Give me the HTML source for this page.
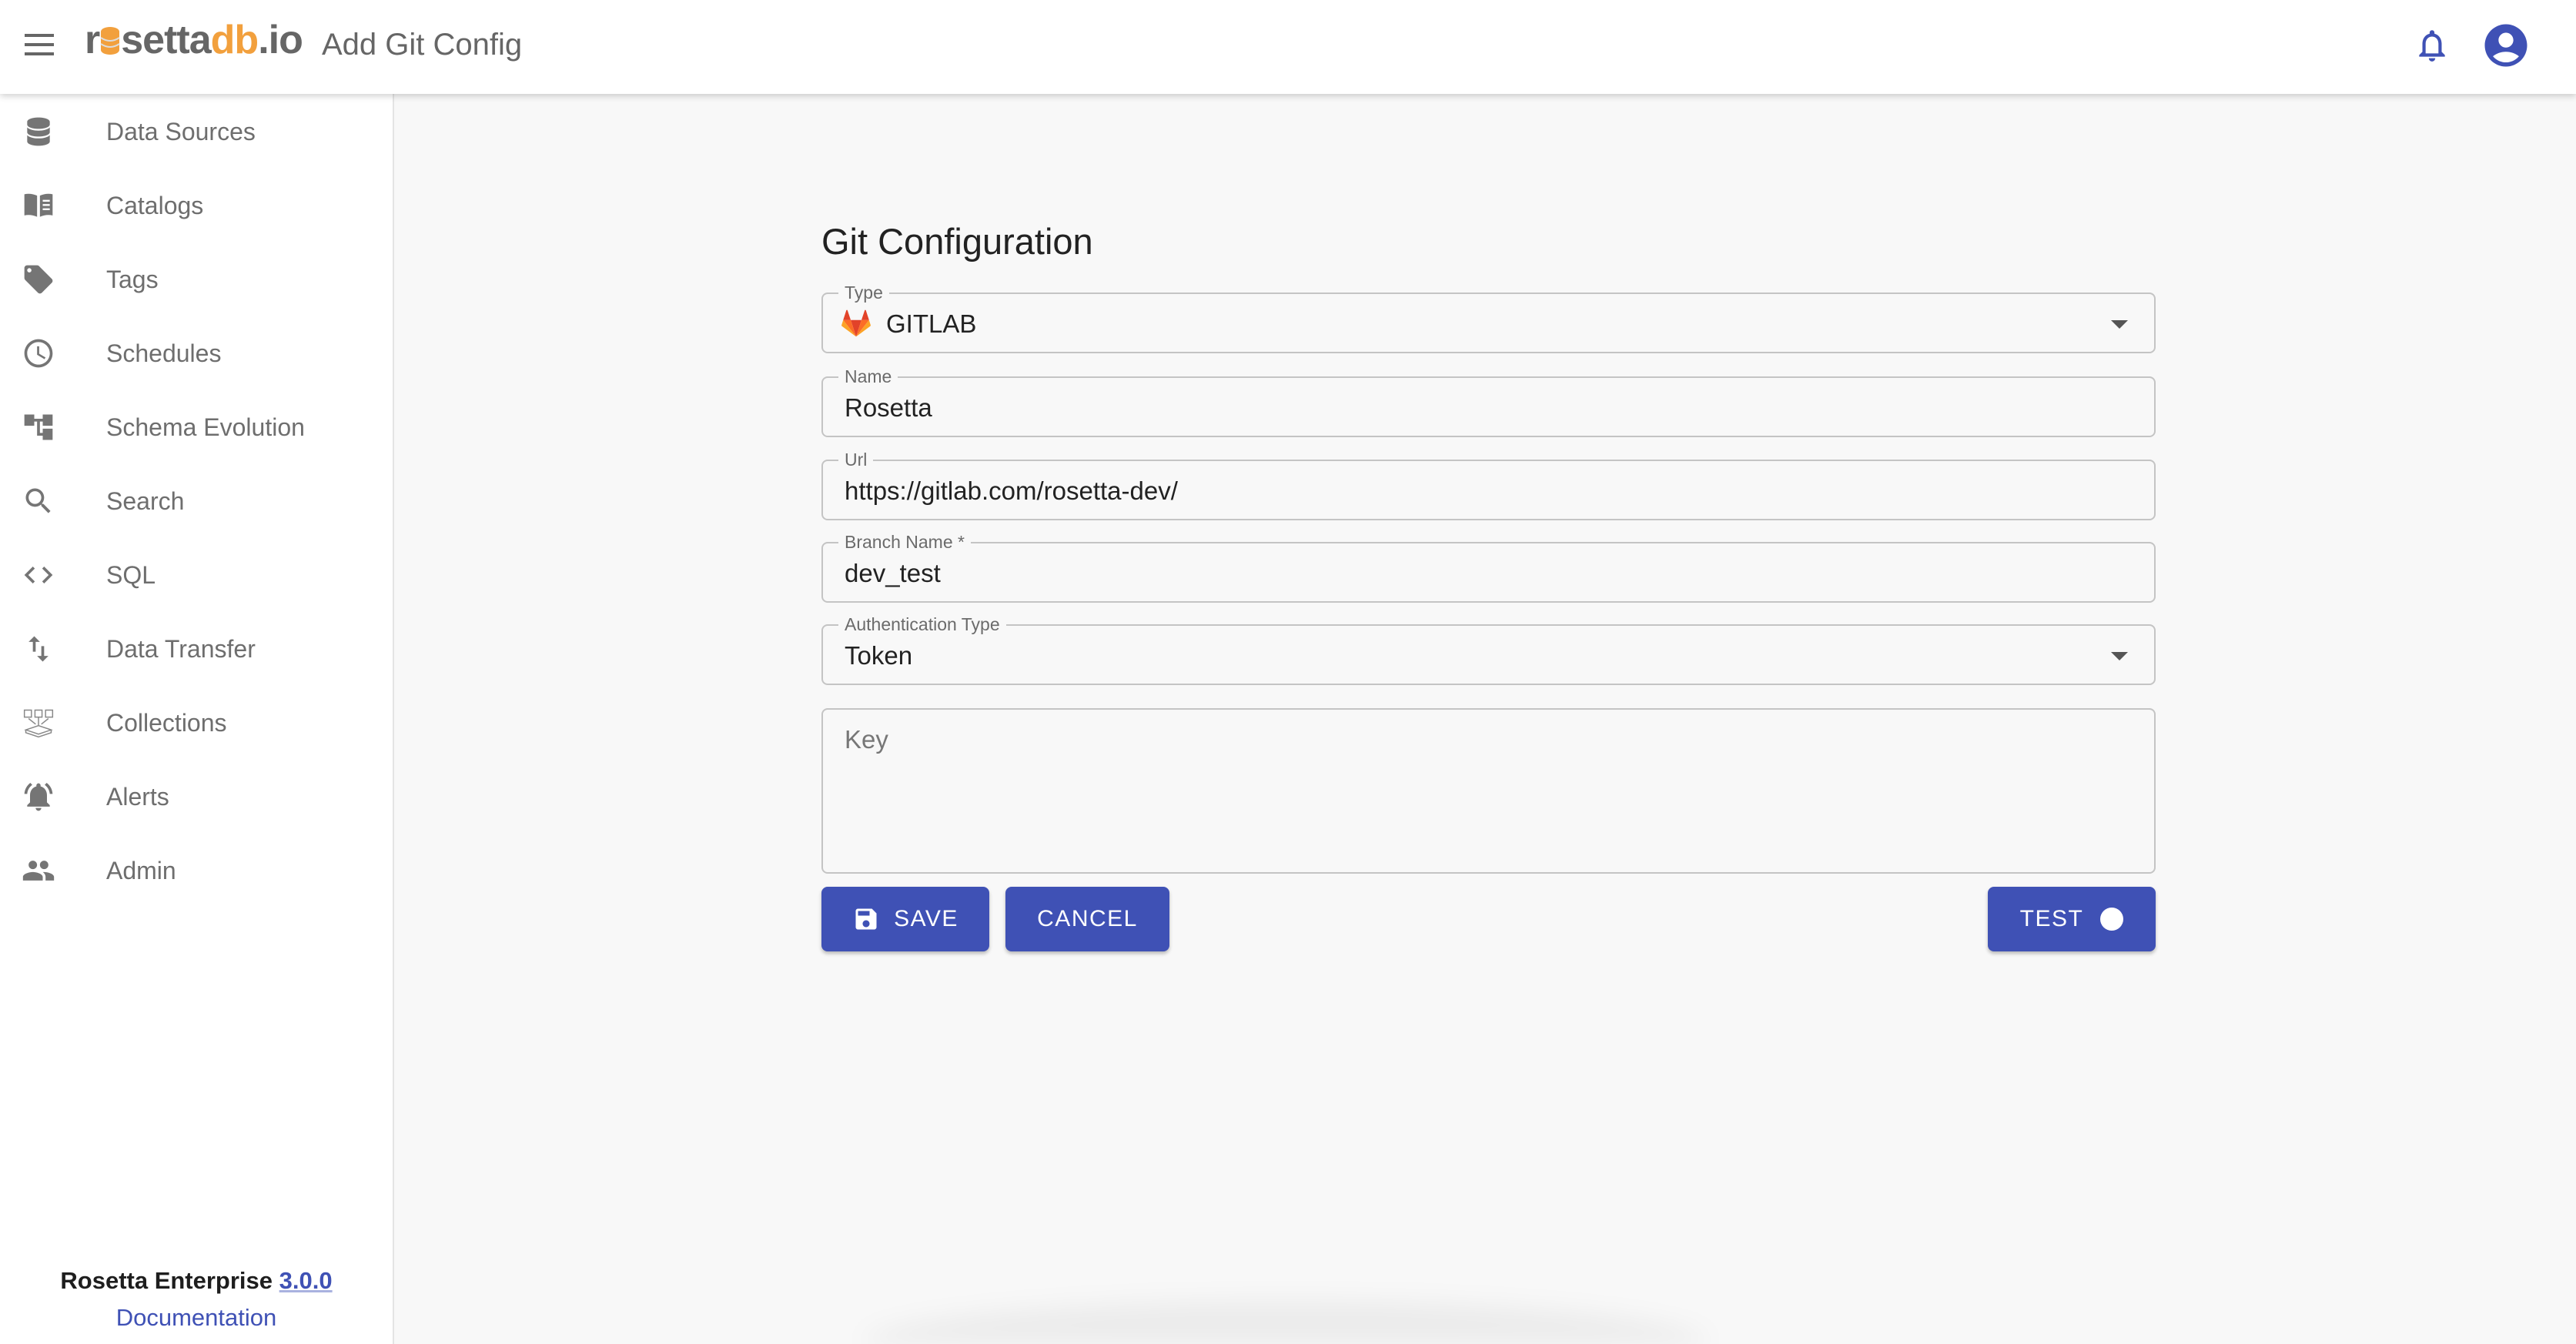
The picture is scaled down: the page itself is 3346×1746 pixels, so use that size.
<!DOCTYPE html>
<html><head><meta charset="utf-8"><style>
*{box-sizing:border-box;margin:0;padding:0}
html{width:3346px;height:1746px;overflow:hidden}
body{width:3346px;height:1746px;overflow:hidden;background:#f8f8f8;font-family:"Liberation Sans",sans-serif;position:relative}
.hdr{position:absolute;left:0;top:0;width:3346px;height:122px;background:#fff;box-shadow:0 3px 8px rgba(0,0,0,.18);z-index:5}
.side{position:absolute;left:0;top:122px;width:512px;height:1624px;background:#fff;border-right:2px solid #e4e4e4}
.nav{position:absolute;left:0;height:60px;width:512px;display:flex;align-items:center}
.nav svg{position:absolute;left:28px;width:44px;height:44px;fill:#757575}
.nav span{position:absolute;left:138px;font-size:32px;color:#6e6e6e}
.fld{position:absolute;left:1067px;width:1733px;height:79px;border:2px solid #c4c4c4;border-radius:8px}
.lbl{position:absolute;left:20px;top:-15px;background:#f8f8f8;padding:0 8px;font-size:23px;color:#6b6b6b;line-height:26px}
.val{position:absolute;left:28px;top:20px;font-size:33px;color:#222}
.arr{position:absolute;right:34px;top:34px;width:0;height:0;border-left:11px solid transparent;border-right:11px solid transparent;border-top:11px solid #555}
.btn{position:absolute;top:1152px;height:84px;background:#3f51b5;border-radius:8px;color:#fff;font-size:30px;letter-spacing:1.5px;display:flex;align-items:center;justify-content:center;box-shadow:0 3px 5px rgba(0,0,0,.25)}
</style></head><body>
<div class="hdr">
<svg style="position:absolute;left:32px;top:42px" width="40" height="32" viewBox="0 0 40 32"><rect y="2" width="38" height="4" fill="#666"/><rect y="14" width="38" height="4" fill="#666"/><rect y="26" width="38" height="4" fill="#666"/></svg>
<div style="position:absolute;left:110px;top:22px;font-size:52px;font-weight:bold;letter-spacing:-1px;color:#666">r<span style="display:inline-block;width:26px;height:34px;position:relative;top:2px;margin:0 1px"><svg width="26" height="38" viewBox="0 0 26 38" style="position:absolute;top:-4px"><ellipse cx="13" cy="8" rx="12" ry="6" fill="#f2a03d"/><rect x="1" y="8" width="24" height="24" fill="#f2a03d"/><ellipse cx="13" cy="32" rx="12" ry="6" fill="#f2a03d"/><path d="M1 16q12 8 24 0M1 24q12 8 24 0" stroke="#ddd" stroke-width="2" fill="none"/></svg></span>setta<span style="color:#f2a03d">db</span>.io</div>
<div style="position:absolute;left:418px;top:36px;font-size:40px;color:#666">Add Git Config</div>
<svg style="position:absolute;left:3134px;top:30px" width="50" height="58" viewBox="0 0 24 24"><path fill="#3f51b5" d="M12 22c1.1 0 2-.9 2-2h-4c0 1.1.89 2 2 2zm6-6v-5c0-3.070-1.64-5.640-4.5-6.320V4c0-.83-.67-1.5-1.5-1.5s-1.5.67-1.5 1.5v.68C7.63 5.36 6 7.92 6 11v5l-2 2v1h16v-1l-2-2zm-2 1H8v-6c0-2.48 1.51-4.5 4-4.5s4 2.02 4 4.5v6z"/></svg>
<svg style="position:absolute;left:3222px;top:26px" width="66" height="66" viewBox="0 0 24 24"><path fill="#3f51b5" d="M12 2C6.48 2 2 6.48 2 12s4.480 10 10 10 10-4.48 10-10S17.52 2 12 2zm0 4c1.93 0 3.5 1.57 3.5 3.5S13.93 13 12 13s-3.5-1.57-3.5-3.5S10.07 6 12 6zm0 14c-2.03 0-4.43-.82-6.14-2.88C7.55 15.8 9.68 15 12 15s4.45.8 6.14 2.12C16.43 19.18 14.03 20 12 20z"/></svg>
</div>
<div class="side">
<div class="nav" style="top:19px"><svg viewBox="0 0 24 24"><path d="M12 2C7 2 4 3.5 4 5v2c0 1.5 3 3 8 3s8-1.5 8-3V5c0-1.5-3-3-8-3zM4 9v3.5c0 1.5 3 3 8 3s8-1.5 8-3V9c-1.5 1.5-4.5 2.3-8 2.3S5.5 10.5 4 9zm0 5.5V19c0 1.5 3 3 8 3s8-1.5 8-3v-4.5c-1.5 1.5-4.5 2.3-8 2.3s-6.5-.8-8-2.3z"/></svg><span>Data Sources</span></div>
<div class="nav" style="top:115px"><svg viewBox="0 0 24 24"><path d="M2 4q4.5-1 9 1v15q-4.5-2-9-1zM13 5q4.5-2 9-1v15q-4.5-1-9 1zm2 3v1.3h5V8zm0 3v1.3h5V11zm0 3v1.3h5V14z"/></svg><span>Catalogs</span></div>
<div class="nav" style="top:211px"><svg viewBox="0 0 24 24"><path d="M21.41 11.58l-9-9C12.05 2.22 11.55 2 11 2H4c-1.1 0-2 .9-2 2v7c0 .55.22 1.05.59 1.42l9 9c.36.36.86.58 1.41.58.55 0 1.05-.22 1.41-.59l7-7c.37-.36.59-.86.59-1.410 0-.55-.23-1.06-.59-1.42zM5.5 7C4.67 7 4 6.33 4 5.5S4.67 4 5.5 4 7 4.67 7 5.5 6.33 7 5.5 7z"/></svg><span>Tags</span></div>
<div class="nav" style="top:307px"><svg viewBox="0 0 24 24"><path d="M11.99 2C6.47 2 2 6.48 2 12s4.47 10 9.99 10C17.52 22 22 17.52 22 12S17.52 2 11.99 2zM12 20c-4.42 0-8-3.58-8-8s3.58-8 8-8 8 3.58 8 8-3.58 8-8 8zm.5-13H11v6l5.25 3.15.75-1.23-4.5-2.67z"/></svg><span>Schedules</span></div>
<div class="nav" style="top:403px"><svg viewBox="0 0 24 24"><path d="M22 11V3h-7v3H9V3H2v8h7V8h2v10h4v3h7v-8h-7v3h-2V8h2v3z"/></svg><span>Schema Evolution</span></div>
<div class="nav" style="top:499px"><svg viewBox="0 0 24 24"><path d="M15.5 14h-.79l-.28-.27C15.41 12.59 16 11.11 16 9.5 16 5.91 13.09 3 9.5 3S3 5.91 3 9.5 5.91 16 9.5 16c1.61 0 3.09-.59 4.23-1.57l.27.28v.79l5 4.99L20.49 19l-4.99-5zm-6 0C7.01 14 5 11.99 5 9.5S7.01 5 9.5 5 14 7.01 14 9.5 11.99 14 9.5 14z"/></svg><span>Search</span></div>
<div class="nav" style="top:595px"><svg viewBox="0 0 24 24"><path d="M9.4 16.6L4.8 12l4.6-4.6L8 6l-6 6 6 6 1.4-1.4zm5.2 0l4.6-4.6-4.6-4.6L16 6l6 6-6 6-1.4-1.4z"/></svg><span>SQL</span></div>
<div class="nav" style="top:691px"><svg viewBox="0 0 24 24"><path d="M16 17.01V10h-2v7.01h-3L15 21l4-3.99h-3zM9 3L5 6.99h3V14h2V6.99h3L9 3z"/></svg><span>Data Transfer</span></div>
<div class="nav" style="top:787px"><svg viewBox="0 0 24 24"><path fill="none" stroke="#888" stroke-width=".8" d="M2 3h5v5H2zM9.5 3h5v5h-5zM17 3h5v5h-5zM3 17l9-3 9 3-9 3zM3 17v2l9 3 9-3v-2M12 8v6M5 9l5 4M19 9l-5 4"/></svg><span>Collections</span></div>
<div class="nav" style="top:883px"><svg viewBox="0 0 24 24"><path d="M12 22c1.1 0 2-.9 2-2h-4c0 1.1.9 2 2 2zm6-6v-5c0-3-1.6-5.6-4.5-6.3V4c0-.8-.7-1.5-1.5-1.5s-1.5.7-1.5 1.5v.7C7.6 5.4 6 8 6 11v5l-2 2v1h16v-1l-2-2zM7.6 3.6L6.2 2.2C3.8 4 2.2 6.9 2 10h2c.2-2.6 1.5-4.9 3.6-6.4zM20 10h2c-.2-3.1-1.7-6-4.2-7.8l-1.4 1.4c2 1.5 3.4 3.8 3.6 6.4z"/></svg><span>Alerts</span></div>
<div class="nav" style="top:979px"><svg viewBox="0 0 24 24"><path d="M16 11c1.66 0 2.99-1.34 2.99-3S17.66 5 16 5c-1.66 0-3 1.34-3 3s1.34 3 3 3zm-8 0c1.66 0 2.99-1.34 2.99-3S9.66 5 8 5C6.34 5 5 6.34 5 8s1.34 3 3 3zm0 2c-2.33 0-7 1.17-7 3.5V19h14v-2.5c0-2.33-4.67-3.5-7-3.5zm8 0c-.29 0-.62.02-.97.05 1.16.84 1.97 1.97 1.97 3.45V19h6v-2.5c0-2.33-4.67-3.5-7-3.5z"/></svg><span>Admin</span></div>
<div style="position:absolute;left:0;width:510px;top:1524px;text-align:center;font-size:31px;font-weight:bold;color:#1e1e1e">Rosetta Enterprise <span style="color:#3f51b5;text-decoration:underline;text-decoration-color:#a9b2df">3.0.0</span></div>
<div style="position:absolute;left:0;width:510px;top:1572px;text-align:center;font-size:31px;color:#3f51b5">Documentation</div>
</div>
<div style="position:absolute;left:1067px;top:286px;font-size:47px;color:#222">Git Configuration</div>
<div class="fld" style="top:380px"><div class="lbl">Type</div>
<svg style="position:absolute;left:24px;top:20px" width="38" height="36" viewBox="0 0 24 22"><path fill="#e24329" d="M12 22L16.4 8.3H7.6z"/><path fill="#fc6d26" d="M12 22L7.6 8.3H1.4z"/><path fill="#fca326" d="M1.4 8.3L.1 12.4c-.1.4 0 .8.3 1L12 22z"/><path fill="#e24329" d="M1.4 8.3h6.2L4.9.3c-.1-.4-.7-.4-.9 0z"/><path fill="#fc6d26" d="M12 22l4.4-13.7h6.2z"/><path fill="#fca326" d="M22.6 8.3l1.3 4.1c.1.4 0 .8-.3 1L12 22z"/><path fill="#e24329" d="M22.6 8.3h-6.2L19.1.3c.1-.4.7-.4.9 0z"/></svg>
<div class="val" style="left:82px">GITLAB</div><div class="arr"></div></div>
<div class="fld" style="top:489px"><div class="lbl">Name</div><div class="val">Rosetta</div></div>
<div class="fld" style="top:597px"><div class="lbl">Url</div><div class="val">https://gitlab.com/rosetta-dev/</div></div>
<div class="fld" style="top:704px"><div class="lbl">Branch Name *</div><div class="val">dev_test</div></div>
<div class="fld" style="top:811px"><div class="lbl">Authentication Type</div><div class="val">Token</div><div class="arr"></div></div>
<div class="fld" style="top:920px;height:215px"><div class="val" style="color:#777;top:20px">Key</div></div>
<div class="btn" style="left:1067px;width:218px"><svg width="36" height="36" viewBox="0 0 24 24" style="margin-right:18px"><path fill="#fff" d="M17 3H5c-1.11 0-2 .9-2 2v14c0 1.1.89 2 2 2h14c1.1 0 2-.9 2-2V7l-4-4zm-5 16c-1.66 0-3-1.34-3-3s1.34-3 3-3 3 1.34 3 3-1.34 3-3 3zm3-10H5V5h10v4z"/></svg>SAVE</div>
<div class="btn" style="left:1306px;width:213px">CANCEL</div>
<div class="btn" style="left:2582px;width:218px">TEST<span style="display:inline-block;width:30px;height:30px;border-radius:50%;background:#fff;margin-left:22px"></span></div>
<div style="position:absolute;left:1120px;top:1690px;width:1100px;height:56px;border-radius:50%/100% 100% 0 0;background:rgba(0,0,0,.05);filter:blur(16px)"></div>
</body></html>
